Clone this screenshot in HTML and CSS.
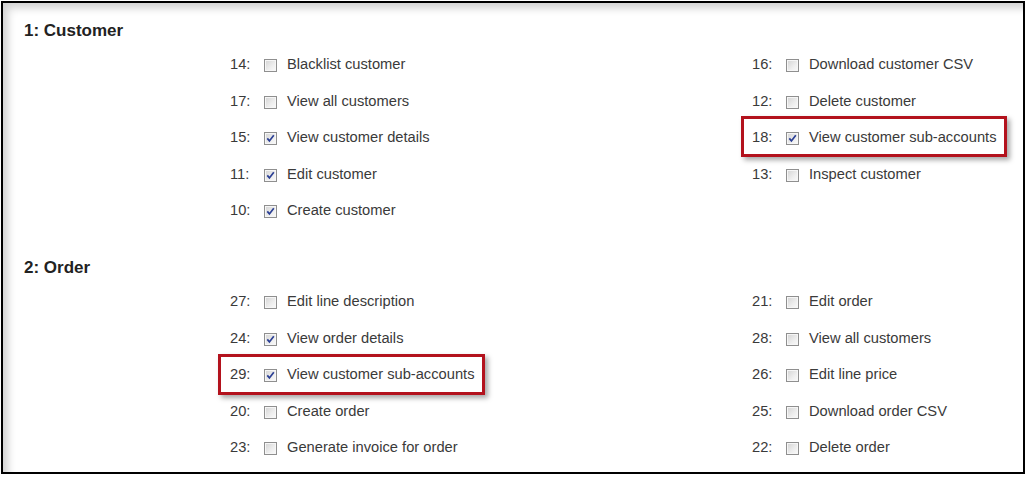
FILE: index.html
```html
<!DOCTYPE html>
<html>
<head>
<meta charset="utf-8">
<link rel="stylesheet" href="styles.css">
</head>
<body>
<div class="frame">
  <section class="group">
    <h2 class="title">1: Customer</h2>
    <div class="grid">
      <div class="col">
        <div class="item"><span class="num">14:</span><span class="cb"></span><span class="lbl">Blacklist customer</span></div>
        <div class="item"><span class="num">17:</span><span class="cb"></span><span class="lbl">View all customers</span></div>
        <div class="item"><span class="num">15:</span><span class="cb"><svg viewBox="0 0 13 13" width="13" height="13"><path d="M3.3 6.4 L5.4 8.9 L9.8 3.2" fill="none" stroke="#2b3f94" stroke-width="1.7"/></svg></span><span class="lbl">View customer details</span></div>
        <div class="item"><span class="num">11:</span><span class="cb"><svg viewBox="0 0 13 13" width="13" height="13"><path d="M3.3 6.4 L5.4 8.9 L9.8 3.2" fill="none" stroke="#2b3f94" stroke-width="1.7"/></svg></span><span class="lbl">Edit customer</span></div>
        <div class="item"><span class="num">10:</span><span class="cb"><svg viewBox="0 0 13 13" width="13" height="13"><path d="M3.3 6.4 L5.4 8.9 L9.8 3.2" fill="none" stroke="#2b3f94" stroke-width="1.7"/></svg></span><span class="lbl">Create customer</span></div>
      </div>
      <div class="col">
        <div class="item"><span class="num">16:</span><span class="cb"></span><span class="lbl">Download customer CSV</span></div>
        <div class="item"><span class="num">12:</span><span class="cb"></span><span class="lbl">Delete customer</span></div>
        <div class="item"><span class="hl"><span class="num">18:</span><span class="cb"><svg viewBox="0 0 13 13" width="13" height="13"><path d="M3.3 6.4 L5.4 8.9 L9.8 3.2" fill="none" stroke="#2b3f94" stroke-width="1.7"/></svg></span><span class="lbl">View customer sub-accounts</span></span></div>
        <div class="item"><span class="num">13:</span><span class="cb"></span><span class="lbl">Inspect customer</span></div>
      </div>
    </div>
  </section>
  <section class="group">
    <h2 class="title">2: Order</h2>
    <div class="grid">
      <div class="col">
        <div class="item"><span class="num">27:</span><span class="cb"></span><span class="lbl">Edit line description</span></div>
        <div class="item"><span class="num">24:</span><span class="cb"><svg viewBox="0 0 13 13" width="13" height="13"><path d="M3.3 6.4 L5.4 8.9 L9.8 3.2" fill="none" stroke="#2b3f94" stroke-width="1.7"/></svg></span><span class="lbl">View order details</span></div>
        <div class="item"><span class="hl hl-left"><span class="num">29:</span><span class="cb"><svg viewBox="0 0 13 13" width="13" height="13"><path d="M3.3 6.4 L5.4 8.9 L9.8 3.2" fill="none" stroke="#2b3f94" stroke-width="1.7"/></svg></span><span class="lbl">View customer sub-accounts</span></span></div>
        <div class="item"><span class="num">20:</span><span class="cb"></span><span class="lbl">Create order</span></div>
        <div class="item"><span class="num">23:</span><span class="cb"></span><span class="lbl">Generate invoice for order</span></div>
      </div>
      <div class="col">
        <div class="item"><span class="num">21:</span><span class="cb"></span><span class="lbl">Edit order</span></div>
        <div class="item"><span class="num">28:</span><span class="cb"></span><span class="lbl">View all customers</span></div>
        <div class="item"><span class="num">26:</span><span class="cb"></span><span class="lbl">Edit line price</span></div>
        <div class="item"><span class="num">25:</span><span class="cb"></span><span class="lbl">Download order CSV</span></div>
        <div class="item"><span class="num">22:</span><span class="cb"></span><span class="lbl">Delete order</span></div>
      </div>
    </div>
  </section>
</div>
</body>
</html>
```
FILE: styles.css
```css
html, body {
  margin: 0;
  padding: 0;
  background: #ffffff;
}
body {
  font-family: "Liberation Sans", Arial, sans-serif;
  color: #3a3a3a;
}
.frame {
  box-sizing: border-box;
  width: 1024px;
  height: 473px;
  margin: 1px 0 0 1px;
  border: 2px solid #000;
  background: #fff;
  box-shadow: inset 8px 8px 8px -3px rgba(0, 0, 0, 0.18);
  padding-top: 18.3px;
  overflow: hidden;
}
.group + .group {
  margin-top: 29.6px;
}
.title {
  margin: 0 0 5px 0;
  padding-left: 21px;
  font-size: 17px;
  line-height: 20px;
  font-weight: bold;
  color: #222;
}
.grid {
  display: grid;
  grid-template-columns: 522px 400px;
  margin-left: 227px;
}
.col {
  display: flex;
  flex-direction: column;
}
.item {
  display: flex;
  align-items: center;
  height: 36.5px;
  font-size: 14.7px;
  line-height: 36.5px;
}
.hl {
  position: relative;
  display: flex;
  align-items: center;
  height: 36.5px;
}
.hl::after {
  content: "";
  position: absolute;
  top: -3px;
  bottom: -1px;
  left: -11px;
  right: -10px;
  border: 3px solid #b3121d;
  box-shadow: 3px 3px 5px rgba(0, 0, 0, 0.35);
  pointer-events: none;
}
.hl-left::after {
  top: -2px;
  bottom: -2px;
  left: -12px;
}
.num {
  width: 34px;
  flex: none;
}
.cb {
  box-sizing: border-box;
  width: 13px;
  height: 13px;
  flex: none;
  border: 1px solid #8f8f8f;
  background: linear-gradient(135deg, #d3d3d3 0%, #eeeeee 60%, #fafafa 100%);
  box-shadow: inset 0 0 0 1px #f6f6f6;
  margin-right: 10px;
  margin-top: 2px;
  position: relative;
}
.cb svg {
  position: absolute;
  left: -1px;
  top: -1px;
}
.lbl {
  white-space: nowrap;
}
```
